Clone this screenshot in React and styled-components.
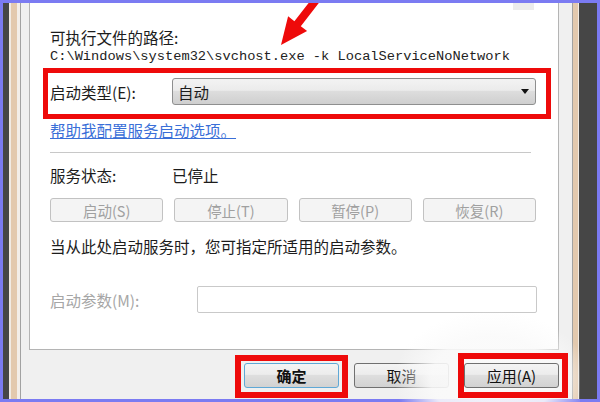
import React from 'react';
import styled, { createGlobalStyle } from 'styled-components';

const GlobalStyle = createGlobalStyle`
  html, body {
    margin: 0;
    padding: 0;
    background: #7b7bf2;
  }
  body {
    font-family: "Noto Sans CJK SC", "Noto Sans", sans-serif;
    color: #1c1c1c;
  }
`;

const Screen = styled.div`
  position: relative;
  display: flex;
  width: 600px;
  height: 402px;
  box-sizing: border-box;
  padding: 3px;
  background: #7b7bf2;
  overflow: hidden;
`;

const DarkStrip = styled.div`
  flex: none;
  width: ${(p) => p.$w}px;
  background: #464646;
`;

const BeigeStrip = styled.div`
  flex: none;
  width: ${(p) => p.$w}px;
  background: ${(p) =>
    p.$side === 'left'
      ? 'linear-gradient(to right, #f1ebe4 0 2px, #e3c9ae 2px 8px, #f3eee9 8px 11px)'
      : 'linear-gradient(to right, #e3c9ae 0 5px, #f1ebe4 5px 6px)'};
`;

const Window = styled.div`
  flex: 1;
  display: flex;
  flex-direction: column;
  background: #f0f0f0;
  border-left: 1px solid #a2a2a2;
  border-right: 1px solid #a2a2a2;
  padding: 0 13px 0 8px;
`;

const Panel = styled.div`
  display: flex;
  flex-direction: column;
  background: #fff;
  border: 1px solid #b4b4b4;
  border-top: none;
  padding: 0 22px 36px 20px;
`;

const TopBar = styled.div`
  display: flex;
  justify-content: flex-end;
  height: 7px;
`;

const Stub = styled.div`
  width: 21px;
  margin-right: 2px;
  background: #ececec;
`;

const Label = styled.div`
  height: ${(p) => p.$h || 20}px;
  line-height: ${(p) => p.$h || 20}px;
  margin-top: ${(p) => p.$mt || 0}px;
  font-size: 15.5px;
  white-space: nowrap;
  color: ${(p) => (p.$dim ? '#a6a6a6' : '#1c1c1c')};
`;

const PathText = styled.div`
  height: 16px;
  line-height: 16px;
  margin-top: 2px;
  font-family: "Liberation Mono", "DejaVu Sans Mono", monospace;
  font-size: 13.7px;
  color: #222;
  white-space: nowrap;
`;

const Mark = styled.div`
  margin: 3px -15px 0 -7px;
  padding: 5px 10px 9px 2px;
  border: 5px solid #ee0a0a;
`;

const FieldRow = styled.div`
  display: flex;
  align-items: center;
  height: 27px;
  margin-top: ${(p) => p.$mt || 0}px;
`;

const FieldLabel = styled(Label)`
  flex: none;
  width: ${(p) => p.$w}px;
`;

const Select = styled.div`
  flex: 1;
  height: 27px;
  box-sizing: border-box;
  display: flex;
  align-items: center;
  justify-content: space-between;
  padding: 0 6px 0 5px;
  border: 1px solid #8e8f8f;
  border-radius: 3px;
  background: linear-gradient(#f3f3f3, #ebebeb 45%, #dddddd 50%, #cfcfcf);
  font-size: 15.5px;
`;

const Caret = styled.span`
  width: 0;
  height: 0;
  border-left: 4px solid transparent;
  border-right: 4px solid transparent;
  border-top: 5px solid #111;
`;

const HelpLink = styled.a`
  display: block;
  height: 18px;
  line-height: 18px;
  margin-top: 2px;
  font-size: 15.5px;
  color: #3a6fd8;
  text-decoration: underline;
`;

const Divider = styled.div`
  height: 1px;
  margin: 13px 5px 0 0;
  background: #c8c8c8;
`;

const StatusRow = styled.div`
  display: flex;
  margin-top: 12px;
`;

const ControlGrid = styled.div`
  display: grid;
  grid-template-columns: repeat(4, 1fr);
  gap: 11px;
  margin-top: 13px;
`;

const GhostButton = styled.div`
  height: 24px;
  box-sizing: border-box;
  display: flex;
  align-items: center;
  justify-content: center;
  border: 1px solid #c2c2c2;
  border-radius: 3px;
  background: #f4f4f4;
  color: #a0a0a0;
  font-size: 14.5px;
`;

const Input = styled.div`
  flex: 1;
  height: 27px;
  margin-right: -1px;
  box-sizing: border-box;
  border: 1px solid #c9c9c9;
  border-radius: 2px;
  background: #fff;
`;

const ButtonBar = styled.div`
  display: flex;
  justify-content: flex-end;
  align-items: flex-start;
  gap: 15px;
  height: 25px;
  padding-top: 13px;
`;

const Flag = styled.div`
  position: relative;
  z-index: 2;
  margin: ${(p) => p.$m};
  padding: ${(p) => p.$p};
  border: 6px solid #ee0a0a;
`;

const DialogButton = styled.div`
  width: 95px;
  height: 25px;
  box-sizing: border-box;
  display: flex;
  align-items: center;
  justify-content: center;
  border: 1px solid ${(p) => (p.$default ? '#5fa8d6' : '#707070')};
  border-radius: 3px;
  background: linear-gradient(#f4f4f4, #ececec 45%, #dedede 50%, #d2d2d2);
  font-size: 15px;
  font-weight: ${(p) => (p.$default ? 600 : 400)};
  color: #111;
`;

const Watermark = styled.div`
  position: absolute;
  left: 396px;
  top: 312px;
  width: 184px;
  height: 96px;
  z-index: 1;
  pointer-events: none;
  background: radial-gradient(
    ellipse at 52% 70%,
    rgba(250, 250, 250, 0.96) 0%,
    rgba(250, 250, 250, 0.88) 45%,
    rgba(250, 250, 250, 0) 72%
  );
`;

const Arrow = styled.svg`
  position: absolute;
  left: 0;
  top: 0;
  z-index: 3;
`;

export default function App() {
  return (
    <>
      <GlobalStyle />
      <Screen>
        <DarkStrip $w={6} />
        <BeigeStrip $w={11} $side="left" />
        <Window>
          <Panel>
            <TopBar>
              <Stub />
            </TopBar>
            <Label $mt={17}>可执行文件的路径:</Label>
            <PathText>C:\Windows\system32\svchost.exe -k LocalServiceNoNetwork</PathText>
            <Mark>
              <FieldRow>
                <FieldLabel $w={122}>启动类型(E):</FieldLabel>
                <Select>
                  <span>自动</span>
                  <Caret />
                </Select>
              </FieldRow>
            </Mark>
            <HelpLink>帮助我配置服务启动选项。</HelpLink>
            <Divider />
            <StatusRow>
              <FieldLabel $w={122}>服务状态:</FieldLabel>
              <Label>已停止</Label>
            </StatusRow>
            <ControlGrid>
              <GhostButton>启动(S)</GhostButton>
              <GhostButton>停止(T)</GhostButton>
              <GhostButton>暂停(P)</GhostButton>
              <GhostButton>恢复(R)</GhostButton>
            </ControlGrid>
            <Label $mt={14}>当从此处启动服务时，您可指定所适用的启动参数。</Label>
            <FieldRow $mt={30}>
              <FieldLabel $w={147} $dim>启动参数(M):</FieldLabel>
              <Input />
            </FieldRow>
          </Panel>
          <ButtonBar>
            <Flag $m="-8px -9px -10px -9px" $p="2px 3px 4px 3px">
              <DialogButton $default>确定</DialogButton>
            </Flag>
            <DialogButton>取消</DialogButton>
            <Flag $m="-10px -9px -10px -6px" $p="4px 3px 4px 0">
              <DialogButton>应用(A)</DialogButton>
            </Flag>
          </ButtonBar>
        </Window>
        <BeigeStrip $w={6} $side="right" />
        <DarkStrip $w={18} />
        <Watermark />
        <Arrow width="600" height="60" viewBox="0 0 600 60">
          <polygon
            points="281,45 288.1,16.3 294.4,21.2 308.6,3 318.8,3 300.8,26.2 307.1,31.1"
            fill="#ee0a0a"
          />
        </Arrow>
      </Screen>
    </>
  );
}
